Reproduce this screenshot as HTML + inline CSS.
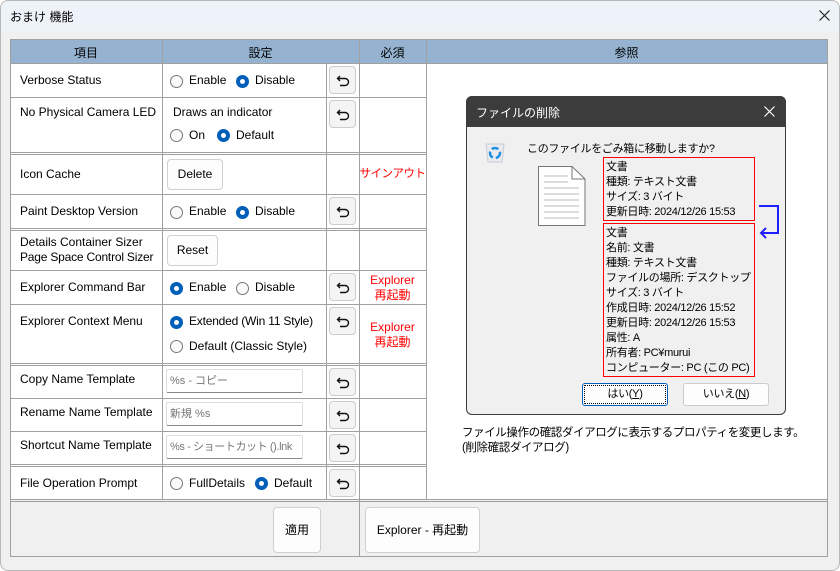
<!DOCTYPE html><html><head><meta charset="utf-8"><style>
*{box-sizing:border-box;margin:0;padding:0}
body{width:840px;height:571px;background:#fff;font-family:"Segoe UI","Liberation Sans","Noto Sans CJK JP",sans-serif;font-size:12px;color:#000;position:relative;overflow:hidden}
.a{position:absolute;white-space:nowrap}
.h{position:absolute;height:1px;background:#a0a0a0}
.v{position:absolute;width:1px;background:#a0a0a0}
.r{position:absolute;width:13px;height:13px;border-radius:50%;border:1px solid #777;background:#fafafa}
.r.on{border:4px solid #005fb8;background:#fff}
.ub{position:absolute;width:27px;height:28px;background:#f4f4f4;border:1px solid #ccc;border-radius:4px}
.ub svg{position:absolute;left:6px;top:6px}
.btn{position:absolute;background:#fdfdfd;border:1px solid #d0d0d0;border-radius:4px;text-align:center;white-space:nowrap}
.tb{position:absolute;background:#fff;border:1px solid #ddd;border-bottom:1px solid #888;border-radius:2px;color:#777;padding-left:3px;line-height:22px;height:24px;width:137px;overflow:hidden;white-space:nowrap;font-size:11px}
.red{color:#f00;text-align:center;position:absolute;width:67px;line-height:15px;white-space:nowrap}
.j{font-family:"Liberation Sans","Noto Sans CJK JP",sans-serif}
.d{font-size:11px;letter-spacing:-0.3px}
</style></head><body>
<div class="a" style="left:0;top:0;width:840px;height:571px;background:#f0f0f0;border:1px solid #b8b8b8;border-radius:8px"></div>
<div class="a" style="left:1px;top:1px;width:838px;height:30px;background:#eef2f9;border-radius:8px 8px 0 0"></div>
<div class="a j" style="left:10px;top:8px;font-size:12px">おまけ 機能</div>
<svg class="a" style="left:399px;top:0;display:none" width="1" height="1"></svg>
<svg class="a" style="left:819px;top:10px" width="11" height="11"><path d="M0.5 0.5L10.5 10.5M10.5 0.5L0.5 10.5" stroke="#222" stroke-width="1.2"/></svg>
<div class="a" style="left:10px;top:39px;width:817px;height:24px;background:#95b3d0"></div>
<div class="a" style="left:10px;top:63px;width:817px;height:437px;background:#fff"></div>
<div class="a" style="left:10px;top:500px;width:817px;height:56px;background:#f0f0f0"></div>
<div class="a j" style="left:10px;top:44px;width:152px;text-align:center">項目</div>
<div class="a j" style="left:162px;top:44px;width:197px;text-align:center">設定</div>
<div class="a j" style="left:359px;top:44px;width:67px;text-align:center">必須</div>
<div class="a j" style="left:426px;top:44px;width:401px;text-align:center">参照</div>
<div class="h" style="left:10px;top:39px;width:817px"></div>
<div class="h" style="left:10px;top:63px;width:817px"></div>
<div class="h" style="left:10px;top:97px;width:416px"></div>
<div class="h" style="left:10px;top:152px;width:416px"></div>
<div class="h" style="left:10px;top:154px;width:416px"></div>
<div class="h" style="left:10px;top:194px;width:416px"></div>
<div class="h" style="left:10px;top:228px;width:416px"></div>
<div class="h" style="left:10px;top:230px;width:416px"></div>
<div class="h" style="left:10px;top:270px;width:416px"></div>
<div class="h" style="left:10px;top:304px;width:416px"></div>
<div class="h" style="left:10px;top:363px;width:416px"></div>
<div class="h" style="left:10px;top:365px;width:416px"></div>
<div class="h" style="left:10px;top:398px;width:416px"></div>
<div class="h" style="left:10px;top:431px;width:416px"></div>
<div class="h" style="left:10px;top:464px;width:416px"></div>
<div class="h" style="left:10px;top:466px;width:416px"></div>
<div class="h" style="left:10px;top:499px;width:817px"></div>
<div class="h" style="left:10px;top:501px;width:817px"></div>
<div class="h" style="left:10px;top:556px;width:817px"></div>
<div class="v" style="left:10px;top:39px;height:518px"></div>
<div class="v" style="left:162px;top:39px;height:461px"></div>
<div class="v" style="left:326px;top:63px;height:437px"></div>
<div class="v" style="left:359px;top:39px;height:518px"></div>
<div class="v" style="left:426px;top:39px;height:461px"></div>
<div class="v" style="left:827px;top:39px;height:518px"></div>
<div class="a" style="left:20px;top:73px">Verbose Status</div>
<div class="a" style="left:20px;top:105px">No Physical Camera LED</div>
<div class="a" style="left:20px;top:167px">Icon Cache</div>
<div class="a" style="left:20px;top:204px">Paint Desktop Version</div>
<div class="a" style="left:20px;top:235px">Details Container Sizer</div>
<div class="a" style="left:20px;top:250px;letter-spacing:-0.2px">Page Space Control Sizer</div>
<div class="a" style="left:20px;top:280px">Explorer Command Bar</div>
<div class="a" style="left:20px;top:314px">Explorer Context Menu</div>
<div class="a" style="left:20px;top:372px">Copy Name Template</div>
<div class="a" style="left:20px;top:405px">Rename Name Template</div>
<div class="a" style="left:20px;top:438px">Shortcut Name Template</div>
<div class="a" style="left:20px;top:476px">File Operation Prompt</div>
<div class="r" style="left:170px;top:75px"></div><div class="a" style="left:189px;top:73px">Enable</div>
<div class="r on" style="left:236px;top:75px"></div><div class="a" style="left:255px;top:73px">Disable</div>
<div class="a" style="left:173px;top:105px">Draws an indicator</div>
<div class="r" style="left:170px;top:129px"></div><div class="a" style="left:189px;top:128px">On</div>
<div class="r on" style="left:217px;top:129px"></div><div class="a" style="left:236px;top:128px">Default</div>
<div class="btn" style="left:167px;top:159px;width:56px;height:31px;line-height:29px">Delete</div>
<div class="r" style="left:170px;top:206px"></div><div class="a" style="left:189px;top:204px">Enable</div>
<div class="r on" style="left:236px;top:206px"></div><div class="a" style="left:255px;top:204px">Disable</div>
<div class="btn" style="left:167px;top:235px;width:51px;height:31px;line-height:29px">Reset</div>
<div class="r on" style="left:170px;top:282px"></div><div class="a" style="left:189px;top:280px">Enable</div>
<div class="r" style="left:236px;top:282px"></div><div class="a" style="left:255px;top:280px">Disable</div>
<div class="r on" style="left:170px;top:316px"></div><div class="a" style="left:189px;top:314px;letter-spacing:-0.2px">Extended (Win 11 Style)</div>
<div class="r" style="left:170px;top:340px"></div><div class="a" style="left:189px;top:339px">Default (Classic Style)</div>
<div class="tb j" style="left:166px;top:369px">%s - コピー</div>
<div class="tb j" style="left:166px;top:402px">新規 %s</div>
<div class="tb j" style="left:166px;top:435px;letter-spacing:-0.4px">%s - ショートカット ().lnk</div>
<div class="r" style="left:170px;top:477px"></div><div class="a" style="left:189px;top:476px">FullDetails</div>
<div class="r on" style="left:255px;top:477px"></div><div class="a" style="left:274px;top:476px">Default</div>
<div class="ub" style="left:329px;top:66px"><svg width="15" height="15"><path d="M4 3L1.5 5.5L4 8M2 5.5H9a3.5 3.5 0 0 1 0 7H4" fill="none" stroke="#111" stroke-width="1.4"/></svg></div>
<div class="ub" style="left:329px;top:100px"><svg width="15" height="15"><path d="M4 3L1.5 5.5L4 8M2 5.5H9a3.5 3.5 0 0 1 0 7H4" fill="none" stroke="#111" stroke-width="1.4"/></svg></div>
<div class="ub" style="left:329px;top:197px"><svg width="15" height="15"><path d="M4 3L1.5 5.5L4 8M2 5.5H9a3.5 3.5 0 0 1 0 7H4" fill="none" stroke="#111" stroke-width="1.4"/></svg></div>
<div class="ub" style="left:329px;top:273px"><svg width="15" height="15"><path d="M4 3L1.5 5.5L4 8M2 5.5H9a3.5 3.5 0 0 1 0 7H4" fill="none" stroke="#111" stroke-width="1.4"/></svg></div>
<div class="ub" style="left:329px;top:307px"><svg width="15" height="15"><path d="M4 3L1.5 5.5L4 8M2 5.5H9a3.5 3.5 0 0 1 0 7H4" fill="none" stroke="#111" stroke-width="1.4"/></svg></div>
<div class="ub" style="left:329px;top:368px"><svg width="15" height="15"><path d="M4 3L1.5 5.5L4 8M2 5.5H9a3.5 3.5 0 0 1 0 7H4" fill="none" stroke="#111" stroke-width="1.4"/></svg></div>
<div class="ub" style="left:329px;top:401px"><svg width="15" height="15"><path d="M4 3L1.5 5.5L4 8M2 5.5H9a3.5 3.5 0 0 1 0 7H4" fill="none" stroke="#111" stroke-width="1.4"/></svg></div>
<div class="ub" style="left:329px;top:434px"><svg width="15" height="15"><path d="M4 3L1.5 5.5L4 8M2 5.5H9a3.5 3.5 0 0 1 0 7H4" fill="none" stroke="#111" stroke-width="1.4"/></svg></div>
<div class="ub" style="left:329px;top:469px"><svg width="15" height="15"><path d="M4 3L1.5 5.5L4 8M2 5.5H9a3.5 3.5 0 0 1 0 7H4" fill="none" stroke="#111" stroke-width="1.4"/></svg></div>
<div class="red j" style="left:359px;top:167px;font-size:11.5px;letter-spacing:-0.5px">サインアウト</div>
<div class="red j" style="left:359px;top:273px">Explorer<br>再起動</div>
<div class="red j" style="left:359px;top:320px">Explorer<br>再起動</div>
<div class="btn j" style="left:273px;top:507px;width:48px;height:46px;line-height:44px">適用</div>
<div class="btn j" style="left:365px;top:507px;width:115px;height:46px;line-height:44px">Explorer - 再起動</div>
<div class="a" style="left:466px;top:96px;width:320px;height:319px;background:#f0f0f0;border:1px solid #3c3c3c;border-radius:6px"></div>
<div class="a" style="left:466px;top:96px;width:320px;height:31px;background:#3c3c3c;border-radius:6px 6px 0 0"></div>
<div class="a j" style="left:476px;top:104px;color:#fff">ファイルの削除</div>
<svg class="a" style="left:764px;top:106px" width="11" height="11"><path d="M0.5 0.5L10.5 10.5M10.5 0.5L0.5 10.5" stroke="#fff" stroke-width="1.2"/></svg>
<svg class="a" style="left:485px;top:142px" width="20" height="22"><path d="M1 2H19L17 20H3Z" fill="#e8eaee" stroke="#c8ccd2"/><circle cx="10" cy="11" r="5" fill="none" stroke="#1d8fe0" stroke-width="2.5" stroke-dasharray="7 3"/></svg>
<div class="a j d" style="left:527px;top:140px">このファイルをごみ箱に移動しますか?</div>
<svg class="a" style="left:538px;top:166px" width="48" height="60"><path d="M0.5 0.5H34L47 13V59.5H0.5Z" fill="#fff" stroke="#777"/><path d="M34 0.5V13H47" fill="none" stroke="#777"/><g stroke="#bbb"><path d="M6 10H30M6 16H30M6 22H41M6 28H41M6 34H41M6 40H41M6 46H41M6 52H41"/></g></svg>
<div class="a" style="left:603px;top:157px;width:152px;height:64px;border:1px solid #f00"></div>
<div class="a j d" style="left:606px;top:160px;line-height:15px">文書<br>種類: テキスト文書<br>サイズ: 3 バイト<br>更新日時: 2024/12/26 15:53</div>
<div class="a" style="left:603px;top:223px;width:152px;height:154px;border:1px solid #f00"></div>
<div class="a j d" style="left:606px;top:226px;line-height:15px">文書<br>名前: 文書<br>種類: テキスト文書<br>ファイルの場所: デスクトップ<br>サイズ: 3 バイト<br>作成日時: 2024/12/26 15:52<br>更新日時: 2024/12/26 15:53<br>属性: A<br>所有者: PC¥murui<br>コンピューター: PC (この PC)</div>
<svg class="a" style="left:756px;top:202px" width="28" height="38"><path d="M3 4H22V31H6" fill="none" stroke="#2020ff" stroke-width="2"/><path d="M10 26L5 31L10 36" fill="none" stroke="#2020ff" stroke-width="2"/></svg>
<div class="a j d" style="left:582px;top:383px;width:86px;height:23px;background:#fdfdfd;border:1px solid #005fb8;border-radius:3px;text-align:center;line-height:21px;outline:1px dotted #000;outline-offset:-3px">はい(<u>Y</u>)</div>
<div class="a j d" style="left:683px;top:383px;width:86px;height:23px;background:#fdfdfd;border:1px solid #ccc;border-radius:3px;text-align:center;line-height:21px">いいえ(<u>N</u>)</div>
<div class="a j" style="left:462px;top:426px;line-height:15px;font-size:11.5px;letter-spacing:-0.4px">ファイル操作の確認ダイアログに表示するプロパティを変更します。<br>(削除確認ダイアログ)</div>
</body></html>
